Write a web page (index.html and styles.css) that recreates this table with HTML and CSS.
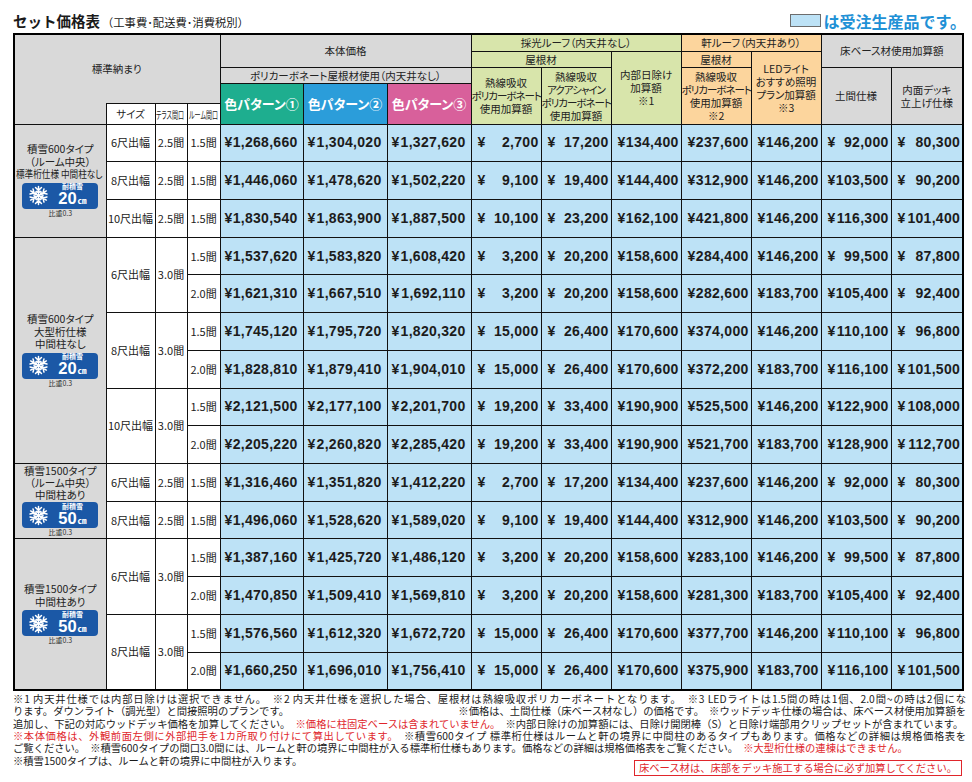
FILE: index.html
```html
<!DOCTYPE html>
<html lang="ja">
<head>
<meta charset="utf-8">
<title>セット価格表</title>
<link rel="stylesheet" href="styles.css">
</head>
<body>
<svg width="0" height="0" class="defs" aria-hidden="true">
  <defs>
    <g id="arm">
      <path d="M12 12V1.6M8.6 2.8L12 6.2 15.4 2.8M9.9 7.3L12 9.2 14.1 7.3" />
    </g>
    <g id="flake" fill="none" stroke="#fff" stroke-width="1.7" stroke-linecap="round" stroke-linejoin="round">
      <use href="#arm"/>
      <use href="#arm" transform="rotate(60 12 12)"/>
      <use href="#arm" transform="rotate(120 12 12)"/>
      <use href="#arm" transform="rotate(180 12 12)"/>
      <use href="#arm" transform="rotate(240 12 12)"/>
      <use href="#arm" transform="rotate(300 12 12)"/>
    </g>
  </defs>
</svg>
<div class="page">
  <div class="top">
    <h1 class="title">セット価格表<small>（工事費･配送費･消費税別）</small></h1>
    <div class="made"><span class="swatch"></span>は受注生産品です。</div>
  </div>

  <table class="price">
    <colgroup>
      <col style="width:92px"><col style="width:49px"><col style="width:32px"><col style="width:33px">
      <col style="width:83px"><col style="width:84px"><col style="width:84px">
      <col style="width:70px"><col style="width:70px"><col style="width:70px">
      <col style="width:70px"><col style="width:70px">
      <col style="width:70px"><col style="width:72px">
    </colgroup>
    <thead>
      <tr class="h1">
        <th class="gray c1h" rowspan="5"></th>
        <th class="gray c2h" colspan="3" rowspan="4"><span class="std">標準納まり</span></th>
        <th class="gray" colspan="3" rowspan="2">本体価格</th>
        <th class="green" colspan="3">採光ルーフ（内天井なし）</th>
        <th class="orange" colspan="2">軒ルーフ（内天井あり）</th>
        <th class="gray" colspan="2" rowspan="2">床ベース材使用加算額</th>
      </tr>
      <tr class="h2">
        <th class="green" colspan="2">屋根材</th>
        <th class="green" rowspan="4">内部日除け<br>加算額<br>※1</th>
        <th class="orange">屋根材</th>
        <th class="orange" rowspan="4">LEDライト<br>おすすめ照明<br>プラン加算額<br>※3</th>
      </tr>
      <tr class="h3">
        <th class="gray" colspan="3">ポリカーボネート屋根材使用（内天井なし）</th>
        <th class="green" rowspan="3">熱線吸収<br><span class="nw">ポリカーボネート</span><br>使用加算額</th>
        <th class="green" rowspan="3">熱線吸収<br><span class="nw">アクアシャイン</span><br><span class="nw">ポリカーボネート</span><br>使用加算額</th>
        <th class="orange" rowspan="3">熱線吸収<br><span class="nw">ポリカーボネート</span><br>使用加算額<br>※2</th>
        <th class="gray" rowspan="3">土間仕様</th>
        <th class="gray" rowspan="3">内面デッキ<br>立上げ仕様</th>
      </tr>
      <tr class="h4">
        <th class="pat p1" rowspan="2">色パターン①</th>
        <th class="pat p2" rowspan="2">色パターン②</th>
        <th class="pat p3" rowspan="2">色パターン③</th>
      </tr>
      <tr class="h5">
        <th class="sub sizeh">サイズ</th>
        <th class="sub"><span class="sq"><span>テラス間口</span></span></th>
        <th class="sub"><span class="sq"><span>ルーム間口</span></span></th>
      </tr>
    </thead>
    <tbody>
      <!-- group 1 -->
      <tr class="r">
        <td class="grp" rowspan="3">
          <div class="gt">積雪600タイプ<br>（ルーム中央）<br><span class="sq2"><span>標準桁仕様 中間柱なし</span></span></div>
          <div class="badge"><svg class="flake" viewBox="0 0 24 24"><use href="#flake"/></svg><div class="bt"><span class="bl">耐積雪</span><span class="bn">20<small>㎝</small></span></div></div>
          <div class="sg">比重0.3</div>
        </td>
        <td class="sz">6尺出幅</td><td class="sz">2.5間</td><td class="sz">1.5間</td>
        <td class="v"><div><i>¥</i><b>1,268,660</b></div></td><td class="v"><div><i>¥</i><b>1,304,020</b></div></td><td class="v"><div><i>¥</i><b>1,327,620</b></div></td>
        <td class="v n"><div><i>¥</i><b>2,700</b></div></td><td class="v n"><div><i>¥</i><b>17,200</b></div></td><td class="v n"><div><i>¥</i><b>134,400</b></div></td>
        <td class="v n"><div><i>¥</i><b>237,600</b></div></td><td class="v n"><div><i>¥</i><b>146,200</b></div></td><td class="v n"><div><i>¥</i><b>92,000</b></div></td><td class="v n"><div><i>¥</i><b>80,300</b></div></td>
      </tr>
      <tr class="r">
        <td class="sz">8尺出幅</td><td class="sz">2.5間</td><td class="sz">1.5間</td>
        <td class="v"><div><i>¥</i><b>1,446,060</b></div></td><td class="v"><div><i>¥</i><b>1,478,620</b></div></td><td class="v"><div><i>¥</i><b>1,502,220</b></div></td>
        <td class="v n"><div><i>¥</i><b>9,100</b></div></td><td class="v n"><div><i>¥</i><b>19,400</b></div></td><td class="v n"><div><i>¥</i><b>144,400</b></div></td>
        <td class="v n"><div><i>¥</i><b>312,900</b></div></td><td class="v n"><div><i>¥</i><b>146,200</b></div></td><td class="v n"><div><i>¥</i><b>103,500</b></div></td><td class="v n"><div><i>¥</i><b>90,200</b></div></td>
      </tr>
      <tr class="r">
        <td class="sz">10尺出幅</td><td class="sz">2.5間</td><td class="sz">1.5間</td>
        <td class="v"><div><i>¥</i><b>1,830,540</b></div></td><td class="v"><div><i>¥</i><b>1,863,900</b></div></td><td class="v"><div><i>¥</i><b>1,887,500</b></div></td>
        <td class="v n"><div><i>¥</i><b>10,100</b></div></td><td class="v n"><div><i>¥</i><b>23,200</b></div></td><td class="v n"><div><i>¥</i><b>162,100</b></div></td>
        <td class="v n"><div><i>¥</i><b>421,800</b></div></td><td class="v n"><div><i>¥</i><b>146,200</b></div></td><td class="v n"><div><i>¥</i><b>116,300</b></div></td><td class="v n"><div><i>¥</i><b>101,400</b></div></td>
      </tr>
      <!-- group 2 -->
      <tr class="r">
        <td class="grp" rowspan="6">
          <div class="gt">積雪600タイプ<br>大型桁仕様<br>中間柱なし</div>
          <div class="badge"><svg class="flake" viewBox="0 0 24 24"><use href="#flake"/></svg><div class="bt"><span class="bl">耐積雪</span><span class="bn">20<small>㎝</small></span></div></div>
          <div class="sg">比重0.3</div>
        </td>
        <td class="sz" rowspan="2">6尺出幅</td><td class="sz" rowspan="2">3.0間</td><td class="sz">1.5間</td>
        <td class="v"><div><i>¥</i><b>1,537,620</b></div></td><td class="v"><div><i>¥</i><b>1,583,820</b></div></td><td class="v"><div><i>¥</i><b>1,608,420</b></div></td>
        <td class="v n"><div><i>¥</i><b>3,200</b></div></td><td class="v n"><div><i>¥</i><b>20,200</b></div></td><td class="v n"><div><i>¥</i><b>158,600</b></div></td>
        <td class="v n"><div><i>¥</i><b>284,400</b></div></td><td class="v n"><div><i>¥</i><b>146,200</b></div></td><td class="v n"><div><i>¥</i><b>99,500</b></div></td><td class="v n"><div><i>¥</i><b>87,800</b></div></td>
      </tr>
      <tr class="r">
        <td class="sz">2.0間</td>
        <td class="v"><div><i>¥</i><b>1,621,310</b></div></td><td class="v"><div><i>¥</i><b>1,667,510</b></div></td><td class="v"><div><i>¥</i><b>1,692,110</b></div></td>
        <td class="v n"><div><i>¥</i><b>3,200</b></div></td><td class="v n"><div><i>¥</i><b>20,200</b></div></td><td class="v n"><div><i>¥</i><b>158,600</b></div></td>
        <td class="v n"><div><i>¥</i><b>282,600</b></div></td><td class="v n"><div><i>¥</i><b>183,700</b></div></td><td class="v n"><div><i>¥</i><b>105,400</b></div></td><td class="v n"><div><i>¥</i><b>92,400</b></div></td>
      </tr>
      <tr class="r">
        <td class="sz" rowspan="2">8尺出幅</td><td class="sz" rowspan="2">3.0間</td><td class="sz">1.5間</td>
        <td class="v"><div><i>¥</i><b>1,745,120</b></div></td><td class="v"><div><i>¥</i><b>1,795,720</b></div></td><td class="v"><div><i>¥</i><b>1,820,320</b></div></td>
        <td class="v n"><div><i>¥</i><b>15,000</b></div></td><td class="v n"><div><i>¥</i><b>26,400</b></div></td><td class="v n"><div><i>¥</i><b>170,600</b></div></td>
        <td class="v n"><div><i>¥</i><b>374,000</b></div></td><td class="v n"><div><i>¥</i><b>146,200</b></div></td><td class="v n"><div><i>¥</i><b>110,100</b></div></td><td class="v n"><div><i>¥</i><b>96,800</b></div></td>
      </tr>
      <tr class="r">
        <td class="sz">2.0間</td>
        <td class="v"><div><i>¥</i><b>1,828,810</b></div></td><td class="v"><div><i>¥</i><b>1,879,410</b></div></td><td class="v"><div><i>¥</i><b>1,904,010</b></div></td>
        <td class="v n"><div><i>¥</i><b>15,000</b></div></td><td class="v n"><div><i>¥</i><b>26,400</b></div></td><td class="v n"><div><i>¥</i><b>170,600</b></div></td>
        <td class="v n"><div><i>¥</i><b>372,200</b></div></td><td class="v n"><div><i>¥</i><b>183,700</b></div></td><td class="v n"><div><i>¥</i><b>116,100</b></div></td><td class="v n"><div><i>¥</i><b>101,500</b></div></td>
      </tr>
      <tr class="r">
        <td class="sz" rowspan="2">10尺出幅</td><td class="sz" rowspan="2">3.0間</td><td class="sz">1.5間</td>
        <td class="v"><div><i>¥</i><b>2,121,500</b></div></td><td class="v"><div><i>¥</i><b>2,177,100</b></div></td><td class="v"><div><i>¥</i><b>2,201,700</b></div></td>
        <td class="v n"><div><i>¥</i><b>19,200</b></div></td><td class="v n"><div><i>¥</i><b>33,400</b></div></td><td class="v n"><div><i>¥</i><b>190,900</b></div></td>
        <td class="v n"><div><i>¥</i><b>525,500</b></div></td><td class="v n"><div><i>¥</i><b>146,200</b></div></td><td class="v n"><div><i>¥</i><b>122,900</b></div></td><td class="v n"><div><i>¥</i><b>108,000</b></div></td>
      </tr>
      <tr class="r">
        <td class="sz">2.0間</td>
        <td class="v"><div><i>¥</i><b>2,205,220</b></div></td><td class="v"><div><i>¥</i><b>2,260,820</b></div></td><td class="v"><div><i>¥</i><b>2,285,420</b></div></td>
        <td class="v n"><div><i>¥</i><b>19,200</b></div></td><td class="v n"><div><i>¥</i><b>33,400</b></div></td><td class="v n"><div><i>¥</i><b>190,900</b></div></td>
        <td class="v n"><div><i>¥</i><b>521,700</b></div></td><td class="v n"><div><i>¥</i><b>183,700</b></div></td><td class="v n"><div><i>¥</i><b>128,900</b></div></td><td class="v n"><div><i>¥</i><b>112,700</b></div></td>
      </tr>
      <!-- group 3 -->
      <tr class="r">
        <td class="grp tight" rowspan="2">
          <div class="gt">積雪1500タイプ<br>（ルーム中央）<br>中間柱あり</div>
          <div class="badge"><svg class="flake" viewBox="0 0 24 24"><use href="#flake"/></svg><div class="bt"><span class="bl">耐積雪</span><span class="bn">50<small>㎝</small></span></div></div>
          <div class="sg">比重0.3</div>
        </td>
        <td class="sz">6尺出幅</td><td class="sz">2.5間</td><td class="sz">1.5間</td>
        <td class="v"><div><i>¥</i><b>1,316,460</b></div></td><td class="v"><div><i>¥</i><b>1,351,820</b></div></td><td class="v"><div><i>¥</i><b>1,412,220</b></div></td>
        <td class="v n"><div><i>¥</i><b>2,700</b></div></td><td class="v n"><div><i>¥</i><b>17,200</b></div></td><td class="v n"><div><i>¥</i><b>134,400</b></div></td>
        <td class="v n"><div><i>¥</i><b>237,600</b></div></td><td class="v n"><div><i>¥</i><b>146,200</b></div></td><td class="v n"><div><i>¥</i><b>92,000</b></div></td><td class="v n"><div><i>¥</i><b>80,300</b></div></td>
      </tr>
      <tr class="r">
        <td class="sz">8尺出幅</td><td class="sz">2.5間</td><td class="sz">1.5間</td>
        <td class="v"><div><i>¥</i><b>1,496,060</b></div></td><td class="v"><div><i>¥</i><b>1,528,620</b></div></td><td class="v"><div><i>¥</i><b>1,589,020</b></div></td>
        <td class="v n"><div><i>¥</i><b>9,100</b></div></td><td class="v n"><div><i>¥</i><b>19,400</b></div></td><td class="v n"><div><i>¥</i><b>144,400</b></div></td>
        <td class="v n"><div><i>¥</i><b>312,900</b></div></td><td class="v n"><div><i>¥</i><b>146,200</b></div></td><td class="v n"><div><i>¥</i><b>103,500</b></div></td><td class="v n"><div><i>¥</i><b>90,200</b></div></td>
      </tr>
      <!-- group 4 -->
      <tr class="r">
        <td class="grp" rowspan="4">
          <div class="gt">積雪1500タイプ<br>中間柱あり</div>
          <div class="badge"><svg class="flake" viewBox="0 0 24 24"><use href="#flake"/></svg><div class="bt"><span class="bl">耐積雪</span><span class="bn">50<small>㎝</small></span></div></div>
          <div class="sg">比重0.3</div>
        </td>
        <td class="sz" rowspan="2">6尺出幅</td><td class="sz" rowspan="2">3.0間</td><td class="sz">1.5間</td>
        <td class="v"><div><i>¥</i><b>1,387,160</b></div></td><td class="v"><div><i>¥</i><b>1,425,720</b></div></td><td class="v"><div><i>¥</i><b>1,486,120</b></div></td>
        <td class="v n"><div><i>¥</i><b>3,200</b></div></td><td class="v n"><div><i>¥</i><b>20,200</b></div></td><td class="v n"><div><i>¥</i><b>158,600</b></div></td>
        <td class="v n"><div><i>¥</i><b>283,100</b></div></td><td class="v n"><div><i>¥</i><b>146,200</b></div></td><td class="v n"><div><i>¥</i><b>99,500</b></div></td><td class="v n"><div><i>¥</i><b>87,800</b></div></td>
      </tr>
      <tr class="r">
        <td class="sz">2.0間</td>
        <td class="v"><div><i>¥</i><b>1,470,850</b></div></td><td class="v"><div><i>¥</i><b>1,509,410</b></div></td><td class="v"><div><i>¥</i><b>1,569,810</b></div></td>
        <td class="v n"><div><i>¥</i><b>3,200</b></div></td><td class="v n"><div><i>¥</i><b>20,200</b></div></td><td class="v n"><div><i>¥</i><b>158,600</b></div></td>
        <td class="v n"><div><i>¥</i><b>281,300</b></div></td><td class="v n"><div><i>¥</i><b>183,700</b></div></td><td class="v n"><div><i>¥</i><b>105,400</b></div></td><td class="v n"><div><i>¥</i><b>92,400</b></div></td>
      </tr>
      <tr class="r">
        <td class="sz" rowspan="2">8尺出幅</td><td class="sz" rowspan="2">3.0間</td><td class="sz">1.5間</td>
        <td class="v"><div><i>¥</i><b>1,576,560</b></div></td><td class="v"><div><i>¥</i><b>1,612,320</b></div></td><td class="v"><div><i>¥</i><b>1,672,720</b></div></td>
        <td class="v n"><div><i>¥</i><b>15,000</b></div></td><td class="v n"><div><i>¥</i><b>26,400</b></div></td><td class="v n"><div><i>¥</i><b>170,600</b></div></td>
        <td class="v n"><div><i>¥</i><b>377,700</b></div></td><td class="v n"><div><i>¥</i><b>146,200</b></div></td><td class="v n"><div><i>¥</i><b>110,100</b></div></td><td class="v n"><div><i>¥</i><b>96,800</b></div></td>
      </tr>
      <tr class="r">
        <td class="sz">2.0間</td>
        <td class="v"><div><i>¥</i><b>1,660,250</b></div></td><td class="v"><div><i>¥</i><b>1,696,010</b></div></td><td class="v"><div><i>¥</i><b>1,756,410</b></div></td>
        <td class="v n"><div><i>¥</i><b>15,000</b></div></td><td class="v n"><div><i>¥</i><b>26,400</b></div></td><td class="v n"><div><i>¥</i><b>170,600</b></div></td>
        <td class="v n"><div><i>¥</i><b>375,900</b></div></td><td class="v n"><div><i>¥</i><b>183,700</b></div></td><td class="v n"><div><i>¥</i><b>116,100</b></div></td><td class="v n"><div><i>¥</i><b>101,500</b></div></td>
      </tr>
    </tbody>
  </table>

  <div class="notes">
    <p class="ln j">※1 内天井仕様では内部日除けは選択できません。　※2 内天井仕様を選択した場合、屋根材は熱線吸収ポリカーボネートとなります。　※3 LEDライトは1.5間の時は1個、2.0間~の時は2個にな</p>
    <p class="ln sp"><span>ります。ダウンライト（調光型）と間接照明のプランです。</span><span>※価格は、土間仕様（床ベース材なし）の価格です。　※ウッドデッキ仕様の場合は、床ベース材使用加算額を</span></p>
    <p class="ln">追加し、下記の対応ウッドデッキ価格を加算してください。　<span class="red">※価格に柱固定ベースは含まれていません。</span>　※内部日除けの加算額には、日除け開閉棒（S）と日除け端部用クリップセットが含まれています。</p>
    <p class="ln j"><span class="red">※本体価格は、外観前面左側に外部把手を1カ所取り付けにて算出しています。</span>　※積雪600タイプ 標準桁仕様はルームと軒の境界に中間柱のあるタイプもあります。価格などの詳細は規格価格表を</p>
    <p class="ln">ご覧ください。　※積雪600タイプの間口3.0間には、ルームと軒の境界に中間柱が入る標準桁仕様もあります。価格などの詳細は規格価格表をご覧ください。　<span class="red">※大型桁仕様の連棟はできません。</span></p>
    <div class="last">
      <p class="ln">※積雪1500タイプは、ルームと軒の境界に中間柱が入ります。</p>
      <p class="warn">床ベース材は、床部をデッキ施工する場合に必ず加算してください。</p>
    </div>
  </div>
</div>
</body>
</html>
```

FILE: styles.css
```css
* { box-sizing: border-box; }

html, body {
  margin: 0;
  background: #fff;
}

body {
  font-family: "Noto Sans CJK JP", "Noto Sans", sans-serif;
  color: #222;
}

.defs {
  position: absolute;
  width: 0;
  height: 0;
}

.page {
  padding: 8px 0 0 13px;
  width: 972px;
}

/* title row */
.top {
  display: flex;
  justify-content: space-between;
  align-items: center;
  width: 953px;
  height: 25px;
}

.title {
  margin: 0;
  font-size: 14.5px;
  font-weight: bold;
  color: #1a1a1a;
}

.title small {
  font-size: 11.3px;
  font-weight: normal;
  margin-left: 2px;
}

.made {
  display: flex;
  align-items: center;
  gap: 3px;
  font-size: 16px;
  font-weight: bold;
  color: #1f91d6;
}

.swatch {
  display: block;
  width: 31px;
  height: 13px;
  background: #bde2f6;
  border: 1px solid #6d6d6d;
}

/* table */
.price {
  border-collapse: collapse;
  table-layout: fixed;
  width: 949px;
  border: 2px solid #000;
}

.price th,
.price td {
  border: 1px solid #111;
  padding: 0;
  text-align: center;
  vertical-align: middle;
  font-weight: normal;
  font-size: 10.5px;
  line-height: 13px;
  color: #222;
  white-space: nowrap;
  font-feature-settings: "palt";
}

.h1 { height: 17px; }
.h2 { height: 16px; }
.h3 { height: 16px; }
.h4 { height: 20px; }
.h5 { height: 21px; }
.r { height: 37.73px; }

.gray { background: #d9d9d9; }
.green { background: #d8e5ab; }
.orange { background: #fcd59d; }

.c1h { border-right: none !important; }
.c2h { border-left: none !important; }
.sub { background: #fff; }
.sizeh { border-left: 1px solid #111 !important; }

.std {
  display: inline-block;
  margin-left: -92px;
  font-size: 10.5px;
}

.nw { letter-spacing: -1px; }

.pat {
  font-size: 13px !important;
  font-weight: bold !important;
  color: #fff !important;
}
.p1 { background: #1eae8f; }
.p2 { background: #2b9dda; }
.p3 { background: #d8609b; }

.sq {
  display: inline-block;
  width: 30px;
  text-align: left;
  vertical-align: middle;
  white-space: nowrap;
}
.sq > span {
  display: inline-block;
  font-size: 10px;
  transform: scaleX(0.6);
  transform-origin: 0 50%;
}

/* group column */
.grp {
  background: #d9d9d9;
}

.gt {
  font-size: 10.5px;
  line-height: 12.5px;
  color: #222;
}

.sq2 {
  display: inline-block;
  width: 88px;
  text-align: left;
  white-space: nowrap;
  vertical-align: top;
}
.sq2 > span {
  display: inline-block;
  transform: scaleX(0.82);
  transform-origin: 0 50%;
}

.badge {
  display: flex;
  align-items: center;
  width: 76px;
  height: 26px;
  margin: 2px auto 0;
  padding-left: 6px;
  gap: 9px;
  background: #1b58a6;
  border-radius: 4px;
  color: #fff;
}

.flake {
  width: 21px;
  height: 21px;
  flex: none;
}

.bt {
  display: flex;
  flex-direction: column;
  align-items: center;
  line-height: 1;
}

.bl {
  font-size: 7px;
  font-weight: bold;
  line-height: 8px;
}

.bn {
  font-family: "Liberation Sans", Arial, sans-serif;
  font-size: 16.5px;
  font-weight: bold;
  line-height: 16px;
}

.bn small {
  font-family: "Noto Sans CJK JP", sans-serif;
  font-size: 9px;
  font-weight: bold;
  margin-left: 1px;
}

.sg {
  font-size: 7px;
  line-height: 9px;
  color: #333;
}

.tight .gt { line-height: 12px; }
.tight .badge { margin-top: 1px; }

/* size columns */
.sz {
  background: #fff;
  font-size: 11px !important;
  font-feature-settings: normal !important;
}

/* value cells */
.v {
  background: #bde2f6;
  font-family: "Liberation Sans", Arial, sans-serif;
  font-size: 14px !important;
  letter-spacing: 0.3px;
  padding: 0 5px 0 4px !important;
}

.v.n {
  padding: 0 2px 0 6px !important;
}

.v > div {
  display: flex;
  justify-content: space-between;
  align-items: baseline;
}

.v i,
.v b {
  font-style: normal;
  font-weight: bold;
  color: #1c1c1c;
}

/* notes */
.notes {
  width: 953px;
  margin-top: 2px;
  font-size: 10.3px;
  line-height: 12.4px;
  color: #1a1a1a;
}

.ln {
  margin: 0;
  white-space: nowrap;
}

.j {
  text-align: justify;
  text-align-last: justify;
}

.sp {
  display: flex;
  justify-content: space-between;
}

.red { color: #e0262b; }

.last {
  display: flex;
  justify-content: space-between;
  align-items: flex-start;
}

.warn {
  margin: 5px 4px 0 0;
  padding: 0 4px;
  border: 1px solid #e0262b;
  color: #e0262b;
  font-size: 10.3px;
  line-height: 14px;
  white-space: nowrap;
}
```
